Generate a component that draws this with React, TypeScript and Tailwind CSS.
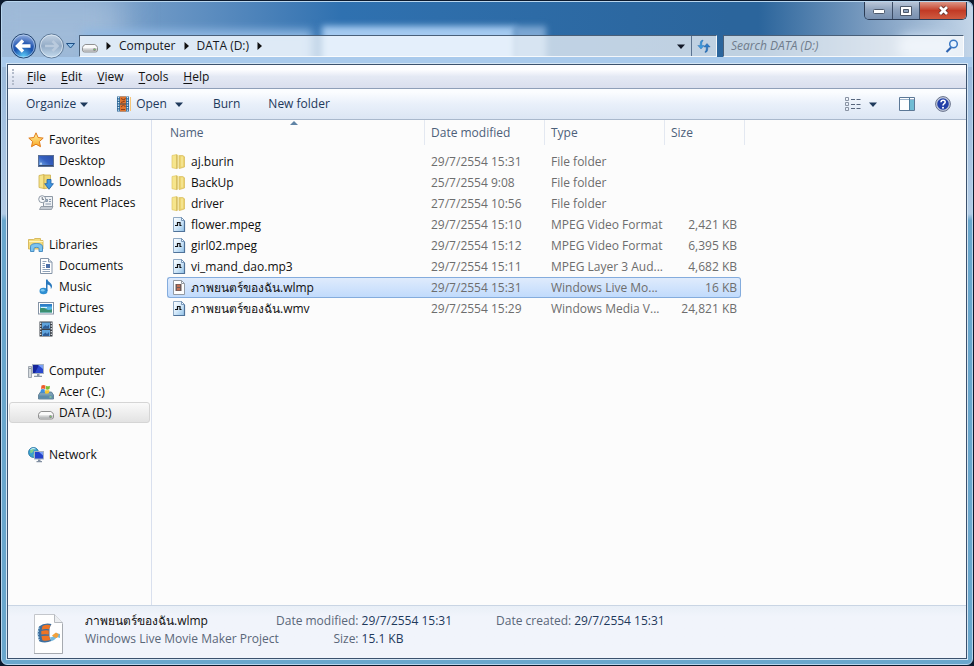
import type { ReactNode } from 'react';
import clsx from 'clsx';

/* ---------- Icons ---------- */

const Svg = ({ children, size = 16 }: { children: ReactNode; size?: number }) => (
  <svg width={size} height={size} viewBox="0 0 16 16" className="shrink-0" aria-hidden="true">
    {children}
  </svg>
);

const StarIcon = () => (
  <Svg>
    <defs>
      <linearGradient id="star" x1="0" y1="0" x2="0" y2="1">
        <stop offset="0" stopColor="#fff3a0" />
        <stop offset="1" stopColor="#f9a825" />
      </linearGradient>
    </defs>
    <path d="M8 .8l2.100 4.700 5.100.6-3.800 3.400 1.100 5.200L8 12.200l-4.500 2.500 1.100-5.200L.8 6.100l5.100-.6z" fill="url(#star)" stroke="#e07b1a" strokeWidth="1" strokeLinejoin="round" />
  </Svg>
);

const DesktopIcon = () => (
  <Svg>
    <defs>
      <linearGradient id="desk" x1="0" y1="1" x2="1" y2="0">
        <stop offset="0" stopColor="#7fb8f0" />
        <stop offset=".5" stopColor="#3560c0" />
        <stop offset="1" stopColor="#2b4ea6" />
      </linearGradient>
    </defs>
    <rect x=".5" y="2.500" width="15" height="11" fill="url(#desk)" stroke="#5a6f94" />
    <path d="M1 12.500h14" stroke="#33486e" />
    <path d="M2 11h2M3 9.500v1.500" stroke="#d8ecff" />
  </Svg>
);

const FolderIcon = () => (
  <Svg>
    <path d="M1 1.500l5-1v14.200l-5-1z" fill="#f6e58c" stroke="#dfc566" strokeWidth=".7" />
    <path d="M6 .8h1.800l.6 2V14H6z" fill="#fbf3b8" />
    <path d="M8.200 1.600h3.600l1.700 1.200V13l-5.300 1.600z" fill="#ecd470" stroke="#d5b754" strokeWidth=".7" />
    <path d="M6 1v13.600" stroke="#c5a748" />
    <path d="M11 2.500v10" stroke="#f8ea9c" strokeWidth="1.400" />
  </Svg>
);

const DownloadsIcon = () => (
  <Svg>
    <path d="M1 1.500l5-1v14l-5-1z" fill="#f6e48a" stroke="#cdaf4b" strokeWidth=".8" />
    <path d="M6 1h6.500v12.500L6 14.700z" fill="#eed876" stroke="#cdaf4b" strokeWidth=".8" />
    <path d="M9 5.500h4v4.200h2.400L11 15.300 6.700 9.700H9z" fill="#3f95e0" stroke="#1d5fa6" strokeWidth=".8" />
  </Svg>
);

const RecentIcon = () => (
  <Svg>
    <path d="M5.500 1.500h9v10h-9z" fill="#eef1f4" stroke="#8e99a5" />
    <path d="M7.500 4.500h2v2h-2zM11 4.500h2M11 6.500h2M7.500 9h5.500" fill="#9db0c4" stroke="#7d8fa3" strokeWidth=".9" />
    <path d="M3 11.500h12l-1.500 3H1.500z" fill="#c3cad2" stroke="#89939e" strokeWidth=".8" />
    <circle cx="4.200" cy="4.200" r="3.500" fill="#f7f9fb" stroke="#8e99a5" />
    <path d="M4.200 2v2.400H6" fill="none" stroke="#5d6873" strokeWidth=".9" />
  </Svg>
);

const LibrariesIcon = () => (
  <Svg>
    <path d="M.5 2.500h5l1.500-1h5.500v2h2.500v8.500H.5z" fill="#f3dc7c" stroke="#d0ae4a" strokeWidth=".8" />
    <path d="M1 4.500h14" stroke="#fff4bd" />
    <path d="M2.500 14.500V9.800C2.500 7.500 5 6.500 8.500 6.500s6 1 6 3.300v4.700H11v-3.200c0-1.200-5-1.200-5 0v3.200z" fill="#7cc4ef" stroke="#3f87c0" strokeWidth=".9" />
  </Svg>
);

const DocumentIcon = () => (
  <Svg>
    <path d="M2.500.5h8l3.500 3.500v11.500H2.500z" fill="#fff" stroke="#8494a8" />
    <path d="M10.500.5V4H14" fill="#dfe7f0" stroke="#8494a8" />
    <path d="M4.500 3.500h4M4.500 5.500h2.500M4.500 7.500h2.500M4.500 9.500h2.500M4.500 11.500h7.500M4.500 13.500h7.500" stroke="#8fa3ba" />
    <path d="M8 6h4v4H8z" fill="#4b6fa8" />
  </Svg>
);

const MusicIcon = () => (
  <Svg>
    <ellipse cx="5.500" cy="12" rx="4" ry="3.300" fill="#2f8fd2" />
    <ellipse cx="4.700" cy="11.200" rx="1.900" ry="1.200" fill="#7cc8f2" />
    <path d="M8 12V.5h1.500c.3 2.500 4.500 3.500 4.500 6.500 0 1.200-.5 2.300-1.200 3 .4-2.600-.9-4-3.300-4.500V12z" fill="#2878bd" />
  </Svg>
);

const PicturesIcon = () => (
  <Svg>
    <rect x=".5" y="2.500" width="15" height="11.500" fill="#fff" stroke="#8593a5" />
    <path d="M2 4h12v8.500H2z" fill="#57b5e6" />
    <path d="M2 4h12v2.500H2z" fill="#2f7fc8" />
    <path d="M2 8.500c2-1.500 4-1 6 .5s4 1 6 .3v3.200H2z" fill="#3b8f70" />
    <path d="M3 7.500h6" stroke="#d9f2ff" />
  </Svg>
);

const VideosIcon = () => (
  <Svg>
    <rect x="1.500" y=".5" width="13" height="15" fill="#3b4149" />
    <path d="M4 1.500h8v6H4zM4 9h8v6H4z" fill="#5fa3dc" />
    <path d="M5 6l2.500-2 1.500 1.500L11 3.500v4H5zM5 13.500L7.500 11.500 9 13l2-2v4H5z" fill="#2c5d98" />
    <path d="M2.700 1.500v14M13.300 1.500v14" stroke="#e9edf2" strokeWidth="1.200" strokeDasharray="1.400 1.400" />
  </Svg>
);

const ComputerIcon = () => (
  <Svg>
    <path d="M.5 3.500h3v11h-3z" fill="#d5dade" stroke="#8d969f" strokeWidth=".8" />
    <path d="M1.200 5.500h1.600" stroke="#7a848d" />
    <rect x="4.500" y="1.500" width="11" height="9" fill="#2b48cf" stroke="#a9b4c2" />
    <path d="M5 2h6L7 10H5z" fill="#16269b" />
    <path d="M10 2h5v4z" fill="#7aa0f5" />
    <path d="M9 11h2.500v1.800H14v1.200H6v-1.200h3z" fill="#8c98a8" />
  </Svg>
);

const SystemDriveIcon = () => (
  <Svg>
    <path d="M2.500 8h11l2 3v4H.5v-4z" fill="#7ba0b8" stroke="#52738a" strokeWidth=".8" />
    <path d="M1 11.500h14v3H1z" fill="#5e8ba8" />
    <path d="M11.500 13h2" stroke="#a7f08e" />
    <path d="M3.500 1.500Q5.500.3 7.500 1.500L7 5Q5 4 3 5z" fill="#ef5b2a" />
    <path d="M8 1.700q2 1.200 4 0L11.500 5q-2 1.200-4 .2z" fill="#7bbd32" />
    <path d="M2.900 5.500q2-1 4 0L6.400 9q-2-1-4 0z" fill="#3c8fe0" />
    <path d="M7.400 5.700q2 1.200 4 0L10.900 9q-2 1.200-4 .2z" fill="#f9c62e" />
  </Svg>
);

const DriveIcon = () => (
  <Svg>
    <defs>
      <linearGradient id="drive" x1="0" y1="0" x2="0" y2="1">
        <stop offset="0" stopColor="#e9eaea" />
        <stop offset="1" stopColor="#a9abad" />
      </linearGradient>
    </defs>
    <path d="M3.200 6.500h9.600q2.700 1.300 2.700 3.200v2.300q0 2-2 2h-11q-2 0-2-2V9.700q0-1.900 2.700-3.200z" fill="#fafafa" stroke="#858585" strokeWidth=".9" />
    <path d="M1 10h14v2q0 1.500-1.500 1.500h-11Q1 13.500 1 12z" fill="url(#drive)" />
    <path d="M11.500 10.500H13.500v2h-2z" fill="#5c5c5c" />
    <path d="M12 11.500h1.200" stroke="#6fd35c" />
  </Svg>
);

const NetworkIcon = () => (
  <Svg>
    <circle cx="5.500" cy="5.500" r="5" fill="#3aa0cf" stroke="#23709c" strokeWidth=".8" />
    <path d="M2 3.500q2-2 4-1.200L5 5 2.500 6.500zM5 7.500l3 .5-2 2.500z" fill="#7fd08d" />
    <path d="M2.500 2.500Q5 .8 7.500 2" stroke="#d4f3ff" fill="none" />
    <rect x="6.500" y="4.500" width="9" height="7.500" fill="#2343cb" stroke="#a9b4c2" />
    <path d="M11 5h4v3.500z" fill="#7aa0f5" />
    <path d="M10 12.500h2.500v1.500H14v1.200H8.500V14H10z" fill="#8290a2" />
  </Svg>
);

const MediaFileIcon = () => (
  <Svg>
    <defs>
      <linearGradient id="media" x1="0" y1="0" x2="1" y2="1">
        <stop offset="0" stopColor="#ffffff" />
        <stop offset=".5" stopColor="#d4e9fa" />
        <stop offset="1" stopColor="#8fc0e6" />
      </linearGradient>
    </defs>
    <path d="M2.500.5h8l3 3v11h-11z" fill="url(#media)" stroke="#8fa9c4" />
    <path d="M13.500 4v10.500h-11" fill="none" stroke="#4f7299" strokeWidth="1.200" />
    <path d="M10.500.5v3h3z" fill="#f5fbff" stroke="#5f83aa" strokeWidth=".8" />
    <path d="M4 8.500h2.500V5.500h2.500v3h1.500" fill="none" stroke="#111" strokeWidth="1.200" />
  </Svg>
);

const ProjectFileIcon = () => (
  <Svg>
    <path d="M2.500.5h8l3 3v11h-11z" fill="#fdfdfd" stroke="#939aa3" />
    <path d="M10.500.5v3h3" fill="none" stroke="#939aa3" />
    <path d="M4.500 4h6v7h-6z" fill="#6d5a58" />
    <path d="M6 4.700h3v2.300H6zM6 8h3v2.300H6z" fill="#c56f50" />
  </Svg>
);

const OpenFilmIcon = () => (
  <Svg>
    <rect x="1" y=".5" width="12" height="15" fill="#2d6796" />
    <path d="M4 .5h6v15H4z" fill="#e0762f" />
    <path d="M5 2.500l3 1.500 1.500-2M5 6.500l4-1.500M5 11l2.500-2 2 2M5 13.500h4" fill="none" stroke="#8f3f18" />
    <path d="M2.500 1v15M11.500 1v15" stroke="#d5ecfa" strokeWidth="1.400" strokeDasharray="1.300 1.200" />
    <path d="M4 8h6" stroke="#3c4752" />
    <path d="M14.500 1v14" stroke="#f5c679" />
  </Svg>
);

const LargeProjectIcon = () => (
  <svg width="32" height="40" viewBox="0 0 32 40" className="shrink-0" aria-hidden="true">
    <path d="M1.500.5h20l8 8v31h-28z" fill="#fefefe" stroke="#c3c6cb" />
    <path d="M21.500.5v8h8" fill="#eceef1" stroke="#b5b9bf" />
    <path d="M1 39.500h28.500V10" fill="none" stroke="#a6aab0" />
    <path d="M6 12.500Q11 8.500 18.500 10l-2 4v9l2 4q-6 2.500-12 .5-3.500-7-.5-15z" fill="#3d6f9f" />
    <path d="M9.500 12q4-2 8-.8l-1.500 4q-3.800-.8-7.300.5zM8.300 17q4-1.200 7.500-.5v4q-3.800-.5-7.500 0zM8.400 22q4-.5 7.500-.2l1.500 4.200q-4.500 1.500-8 .2z" fill="#ee7424" />
    <path d="M6 13.500q-2 6.500.3 12.500" fill="none" stroke="#b8d9ee" strokeWidth="1.400" strokeDasharray="1.500 1.500" />
    <path d="M17 23q2 1 4-1.500l2-2.500 4 1v4l-3-1q-3 4-6 4z" fill="#74b9de" />
    <path d="M19 21.500l4-3 3 2-2 3.500-2.500-.5z" fill="#f3a13b" />
  </svg>
);

const Caret = () => (
  <svg width="8" height="5" viewBox="0 0 8 5" className="shrink-0" aria-hidden="true">
    <path d="M0 .5h8L4 5z" fill="currentColor" />
  </svg>
);

const Chevron = () => (
  <svg width="5" height="8" viewBox="0 0 5 8" className="shrink-0 text-[#111]" aria-hidden="true">
    <path d="M.5 0v8L5 4z" fill="currentColor" />
  </svg>
);

/* ---------- Data ---------- */

type NavItem = { label: string; icon: ReactNode; selected?: boolean };

const navGroups: { root: NavItem; items: NavItem[] }[] = [
  {
    root: { label: 'Favorites', icon: <StarIcon /> },
    items: [
      { label: 'Desktop', icon: <DesktopIcon /> },
      { label: 'Downloads', icon: <DownloadsIcon /> },
      { label: 'Recent Places', icon: <RecentIcon /> },
    ],
  },
  {
    root: { label: 'Libraries', icon: <LibrariesIcon /> },
    items: [
      { label: 'Documents', icon: <DocumentIcon /> },
      { label: 'Music', icon: <MusicIcon /> },
      { label: 'Pictures', icon: <PicturesIcon /> },
      { label: 'Videos', icon: <VideosIcon /> },
    ],
  },
  {
    root: { label: 'Computer', icon: <ComputerIcon /> },
    items: [
      { label: 'Acer (C:)', icon: <SystemDriveIcon /> },
      { label: 'DATA (D:)', icon: <DriveIcon />, selected: true },
    ],
  },
  { root: { label: 'Network', icon: <NetworkIcon /> }, items: [] },
];

const files = [
  { name: 'aj.burin', date: '29/7/2554 15:31', type: 'File folder', size: '', icon: <FolderIcon /> },
  { name: 'BackUp', date: '25/7/2554 9:08', type: 'File folder', size: '', icon: <FolderIcon /> },
  { name: 'driver', date: '27/7/2554 10:56', type: 'File folder', size: '', icon: <FolderIcon /> },
  { name: 'flower.mpeg', date: '29/7/2554 15:10', type: 'MPEG Video Format', size: '2,421 KB', icon: <MediaFileIcon /> },
  { name: 'girl02.mpeg', date: '29/7/2554 15:12', type: 'MPEG Video Format', size: '6,395 KB', icon: <MediaFileIcon /> },
  { name: 'vi_mand_dao.mp3', date: '29/7/2554 15:11', type: 'MPEG Layer 3 Aud...', size: '4,682 KB', icon: <MediaFileIcon /> },
  { name: 'ภาพยนตร์ของฉัน.wlmp', date: '29/7/2554 15:31', type: 'Windows Live Mo...', size: '16 KB', icon: <ProjectFileIcon />, selected: true },
  { name: 'ภาพยนตร์ของฉัน.wmv', date: '29/7/2554 15:29', type: 'Windows Media V...', size: '24,821 KB', icon: <MediaFileIcon /> },
];

const menus = ['File', 'Edit', 'View', 'Tools', 'Help'];

/* ---------- Window parts ---------- */

function CaptionButtons() {
  const glass = 'flex items-center justify-center bg-linear-to-b from-[#b9c6d8] via-[#8fa3be] via-45% to-[#7890b0]';
  return (
    <div className="mr-[5px] flex h-[18px] self-end overflow-hidden rounded-b-[5px] border border-t-0 border-[#2b3c55]">
      <button aria-label="Minimize" className={clsx(glass, 'w-[28px] border-r border-[#3d4d66]')}>
        <svg width="12" height="6" viewBox="0 0 12 6">
          <rect x=".5" y="1.500" width="11" height="4" rx="1" fill="#fff" stroke="#4d596b" />
        </svg>
      </button>
      <button aria-label="Maximize" className={clsx(glass, 'w-[27px] border-r border-[#3d4d66]')}>
        <svg width="12" height="10" viewBox="0 0 12 10">
          <path d="M.5.5h11v9H.5z" fill="#fff" stroke="#4d596b" />
          <path d="M3.500 3.500h5v3h-5z" fill="#8fa3be" stroke="#4d596b" />
        </svg>
      </button>
      <button aria-label="Close" className="flex w-[46px] items-center justify-center bg-linear-to-b from-[#dc9586] via-[#c23a25] via-50% to-[#cf5a40]">
        <svg width="13" height="11" viewBox="0 0 13 11">
          <path d="M3 2l7 7M10 2l-7 7" stroke="#5b2a25" strokeWidth="4.400" />
          <path d="M3 2l7 7M10 2l-7 7" stroke="#fff" strokeWidth="2.800" />
        </svg>
      </button>
    </div>
  );
}

function NavButtons() {
  return (
    <div className="flex items-center">
      <button aria-label="Back">
        <svg width="27" height="26" viewBox="0 0 27 26">
          <defs>
            <radialGradient id="back" cx=".5" cy=".95" r=".95">
              <stop offset="0" stopColor="#5fd0fb" />
              <stop offset=".45" stopColor="#1c55b0" />
              <stop offset=".6" stopColor="#2a5cb4" />
              <stop offset="1" stopColor="#9db6e4" />
            </radialGradient>
          </defs>
          <circle cx="13.500" cy="13" r="12" fill="url(#back)" stroke="#24456f" />
          <circle cx="13.500" cy="13" r="11" fill="none" stroke="#c3dcf5" strokeOpacity=".6" />
          <path d="M20.500 13H8M13 7.500L7.500 13l5.500 5.500" fill="none" stroke="#fff" strokeWidth="3.400" />
        </svg>
      </button>
      <button aria-label="Forward">
        <svg width="28" height="26" viewBox="0 0 28 26">
          <defs>
            <linearGradient id="forward" x1="0" y1="0" x2="0" y2="1">
              <stop offset="0" stopColor="#c4d4e5" />
              <stop offset=".5" stopColor="#93abc6" />
              <stop offset="1" stopColor="#c6ddf0" />
            </linearGradient>
          </defs>
          <circle cx="14.500" cy="13" r="12" fill="url(#forward)" stroke="#5d7896" />
          <circle cx="14.500" cy="13" r="11" fill="none" stroke="#e6f0fa" strokeOpacity=".7" />
          <path d="M8 13h12M15.500 8l5 5-5 5" fill="none" stroke="#b9cadd" strokeWidth="2.600" />
        </svg>
      </button>
      <button aria-label="Recent locations" className="mr-1 flex w-[10px] justify-center">
        <svg width="9" height="6" viewBox="0 0 9 6">
          <path d="M.5.5h8l-4 4.500z" fill="#8fc0ea" stroke="#1d4f86" />
        </svg>
      </button>
    </div>
  );
}

function AddressBar() {
  const box = 'flex h-[22px] items-center border border-white/80 border-t-[#4a6079] border-l-[#4a6079] bg-white/70';
  return (
    <div className="flex items-center px-2">
      <NavButtons />
      <nav aria-label="Address" className={clsx(box, 'flex-1 pl-[2px] text-[#16191f]')}>
        <DriveIcon />
        <span className="ml-2"><Chevron /></span>
        <a href="#computer" className="ml-2">Computer</a>
        <span className="ml-2"><Chevron /></span>
        <a href="#data" className="ml-2">DATA (D:)</a>
        <span className="ml-2"><Chevron /></span>
        <button aria-label="Previous locations" className="ml-auto flex h-full w-5 items-center justify-center text-[#111827]">
          <Caret />
        </button>
        <button aria-label="Refresh" className="flex h-full w-[25px] items-center justify-center border-l border-[#5b7390]">
          <svg width="14" height="14" viewBox="0 0 14 14">
            <path d="M6 1Q3.200 1.200 3.200 4.500v2H.8L4 10l3.200-3.500H4.800v-2Q4.800 2.500 6 2z" fill="#3d9be0" stroke="#2468a8" strokeWidth=".4" />
            <path d="M8 13.500q2.800-.2 2.800-3.500V8h2.400L10 4.500 6.800 8h2.400v2q0 2-1.200 2.500z" fill="#2d7cc8" stroke="#1f5796" strokeWidth=".4" />
          </svg>
        </button>
      </nav>
      <label className={clsx(box, 'ml-[6px] w-[241px] pr-1 pl-[7px]')}>
        <input
          type="search"
          aria-label="Search DATA (D:)"
          placeholder="Search DATA (D:)"
          className="min-w-0 flex-1 bg-transparent italic outline-none placeholder:text-[#6f7c8c]"
        />
        <svg width="14" height="14" viewBox="0 0 14 14" fill="none" aria-hidden="true">
          <path d="M6 8.500L1.500 13" stroke="#2c62b0" strokeWidth="2.200" />
          <circle cx="8.500" cy="5" r="3.800" fill="#e8f3ff" stroke="#3a78c4" strokeWidth="1.500" />
        </svg>
      </label>
    </div>
  );
}

function MenuBar() {
  return (
    <div className="flex h-[24px] items-center border-b border-[#8f9fb8] bg-linear-to-b from-[#fdfdff] from-20% via-[#e4e9f4] via-50% to-[#dadfee]">
      <span className="ml-1 h-4 w-[3px] border-l-2 border-dotted border-[#b4bccb]" />
      <div role="menubar" className="ml-[5px] flex gap-px">
        {menus.map((menu) => (
          <button key={menu} role="menuitem" className="px-[7px] text-[#111]">
            <span className="underline underline-offset-2">{menu[0]}</span>
            {menu.slice(1)}
          </button>
        ))}
      </div>
    </div>
  );
}

function Toolbar() {
  return (
    <div className="flex h-[31px] items-center border-b border-[#a9b8cc] bg-linear-to-b from-[#fbfdff] from-10% via-[#e9f0fa] via-50% to-[#dce6f4] pr-[15px] pl-[18px] text-[#1e395b]">
      <button className="flex items-center gap-1">
        Organize <Caret />
      </button>
      <button className="ml-7 flex items-center gap-1">
        <OpenFilmIcon /> Open
      </button>
      <button aria-label="Open with" className="ml-2 py-2"><Caret /></button>
      <button className="ml-[30px]">Burn</button>
      <button className="ml-7">New folder</button>
      <button aria-label="Change your view" className="ml-auto">
        <svg width="16" height="14" viewBox="0 0 16 14" fill="none" stroke="#8a94a4">
          <path d="M.5.5h3v3h-3zM.5 5.500h3v3h-3zM.5 10.500h3v3h-3z" />
          <path d="M6 2.500h4M11.500 2.500h4M6 7.500h4M11.500 7.500h4M6 11.500h4M11.500 11.500h4" stroke="#56657c" />
        </svg>
      </button>
      <button aria-label="More view options" className="ml-2 py-2"><Caret /></button>
      <button aria-label="Show the preview pane" className="ml-[22px]">
        <svg width="16" height="14" viewBox="0 0 16 14">
          <path d="M.5.5h15v13H.5z" fill="#fdfeff" stroke="#5c7896" />
          <path d="M1 2.500h14" stroke="#9db3ca" />
          <path d="M10.500 3v10h4.500V3z" fill="#6fbcd4" />
          <path d="M10.500 1v12" stroke="#4c7c9c" />
        </svg>
      </button>
      <button aria-label="Get help" className="ml-5">
        <svg width="16" height="16" viewBox="0 0 16 16">
          <circle cx="8" cy="8" r="7.400" fill="#c3cbdc" stroke="#69738c" />
          <circle cx="8" cy="8" r="5.800" fill="#2340a8" />
          <path d="M6 6.300c0-2.800 4.200-2.700 4.200-.2C10.200 7.700 8 7.700 8 9.500" fill="none" stroke="#fff" strokeWidth="1.600" />
          <circle cx="8" cy="11.700" r="1" fill="#fff" />
        </svg>
      </button>
    </div>
  );
}

function NavLink({ item, child }: { item: NavItem; child?: boolean }) {
  return (
    <a
      href="#folder"
      className={clsx(
        'mx-px flex h-[21px] items-center gap-[5px] rounded-[3px] border text-[#101010]',
        child ? 'pl-7' : 'pl-[18px]',
        item.selected ? 'border-[#d5d5d5] bg-linear-to-b from-[#fafafa] to-[#e3e3e3]' : 'border-transparent',
      )}
    >
      {item.icon}
      {item.label}
    </a>
  );
}

function Sidebar() {
  return (
    <nav aria-label="Folders" className="flex w-[144px] shrink-0 flex-col gap-[21px] border-r border-[#d9e0ee] pt-[9px]">
      {navGroups.map(({ root, items }) => (
        <div key={root.label}>
          <NavLink item={root} />
          {items.map((item) => (
            <NavLink key={item.label} item={item} child />
          ))}
        </div>
      ))}
    </nav>
  );
}

function FileList() {
  const th = 'relative border-r border-[#e3e8f1] p-0 pl-[6px] text-left font-normal';
  return (
    <main className="min-w-0 flex-1 pl-[15px]">
      <table className="w-[578px] table-fixed border-separate border-spacing-0">
        <colgroup>
          <col className="w-[258px]" />
          <col className="w-[120px]" />
          <col className="w-[120px]" />
          <col className="w-[76px]" />
          <col className="w-[4px]" />
        </colgroup>
        <thead className="text-[#4c607a]">
          <tr className="h-[25px] align-middle">
            <th scope="col" aria-sort="ascending" className="relative border-r border-[#e3e8f1] p-0 pl-[3px] text-left font-normal">
              Name
              <svg width="8" height="4" viewBox="0 0 8 4" className="absolute top-[1px] left-[123px]" aria-hidden="true">
                <path d="M0 4l4-4 4 4z" fill="#5f83a5" />
              </svg>
            </th>
            <th scope="col" className={th}>Date modified</th>
            <th scope="col" className={th}>Type</th>
            <th scope="col" className="p-0 pl-[6px] text-left font-normal">Size</th>
            <td className="border-r border-[#e3e8f1] p-0" />
          </tr>
        </thead>
        <tbody className="text-[#6d6d6d] before:block before:h-[6px] before:content-['']">
          {files.map((file) => {
            const cell = clsx(
              'border-y p-0',
              file.selected ? 'border-[#84acdd] bg-linear-to-b from-[#dfebfc] to-[#c1dbfc]' : 'border-transparent',
            );
            return (
              <tr key={file.name} className="h-[21px]">
                <td className={clsx(cell, 'rounded-l-[3px] border-l pl-[3px]')}>
                  <span className="flex h-[19px] items-center gap-1 text-[#101010]">
                    {file.icon}
                    {file.name}
                  </span>
                </td>
                <td className={clsx(cell, 'pl-[6px]')}>{file.date}</td>
                <td className={clsx(cell, 'pl-[6px] whitespace-nowrap')}>{file.type}</td>
                <td className={clsx(cell, 'rounded-r-[3px] border-r pr-[3px] text-right whitespace-nowrap')}>{file.size}</td>
              </tr>
            );
          })}
        </tbody>
      </table>
    </main>
  );
}

function DetailsPane() {
  return (
    <footer className="flex items-start border-t border-[#c9d5e4] bg-linear-to-b from-[#e9eff7] to-[#f1f4fb] to-20% pt-[6px] pb-1 pl-[25px] text-[#5a6779]">
      <span className="mt-[2px]"><LargeProjectIcon /></span>
      <div className="ml-5 w-[191px] leading-[18px] whitespace-nowrap">
        <p className="text-[#101010]">ภาพยนตร์ของฉัน.wlmp</p>
        <p>Windows Live Movie Maker Project</p>
      </div>
      <dl className="grid grid-cols-[auto_auto] gap-x-[3px] leading-[18px] whitespace-nowrap">
        <dt className="text-right">Date modified:</dt>
        <dd className="text-[#1e395b]">29/7/2554 15:31</dd>
        <dt className="text-right">Size:</dt>
        <dd className="text-[#1e395b]">15.1 KB</dd>
      </dl>
      <dl className="ml-11 flex gap-[3px] leading-[18px] whitespace-nowrap">
        <dt>Date created:</dt>
        <dd className="text-[#1e395b]">29/7/2554 15:31</dd>
      </dl>
    </footer>
  );
}

export default function App() {
  return (
    <div className="flex min-h-screen bg-[#0c1a2e] p-px font-['Open_Sans','Noto_Sans',sans-serif] text-[12px] leading-4">
      <div className="relative flex flex-1 flex-col overflow-hidden rounded-[6px] border border-[#b9d6ee] bg-linear-to-b from-[#8fb2d8] from-0% via-[#b3cce6] via-32% to-[#6aa7cd] to-33% px-1 pb-1">
        {/* Glass title area */}
        <div className="absolute inset-x-0 top-0 h-[62px] bg-linear-to-r from-[#9db8d6] via-[#2f71b0] via-35% to-[#2b659c] to-75%" />
        <div className="absolute -top-2 -left-5 h-20 w-[140px] bg-[#9fbad8] blur-[16px]" />
        <div className="absolute inset-x-0 top-0 h-[62px] bg-linear-to-r from-transparent from-78% via-[#7f9fc2] via-90% to-[#c3d5e8]" />
        <div className="absolute top-7 left-[80px] h-10 w-[230px] bg-[#8fb8e2] blur-[5px]" />
        <div className="absolute top-6 left-[320px] h-10 w-[194px] bg-[#a5caf0] blur-[3px]" />
        <div className="absolute top-6 left-[512px] h-10 w-[32px] bg-[#7ba6d2] blur-[3px]" />
        <div className="absolute top-8 right-[18px] h-6 w-[56px] rounded-full bg-[#c9dbee] blur-[6px]" />
        <div className="absolute inset-x-0 top-[55px] h-[10px] bg-[#a9caec]" />

        <div className="relative -mx-1 flex flex-col gap-[13px] pb-1">
          <CaptionButtons />
          <AddressBar />
        </div>

        {/* Client area */}
        <div className="relative flex flex-1 flex-col border border-[#d5e6f5]">
          <div className="flex flex-1 flex-col border border-[#3b516d] bg-[#fcfcfc]">
            <MenuBar />
            <Toolbar />
            <div className="flex flex-1">
              <Sidebar />
              <FileList />
            </div>
            <DetailsPane />
          </div>
        </div>
      </div>
    </div>
  );
}
